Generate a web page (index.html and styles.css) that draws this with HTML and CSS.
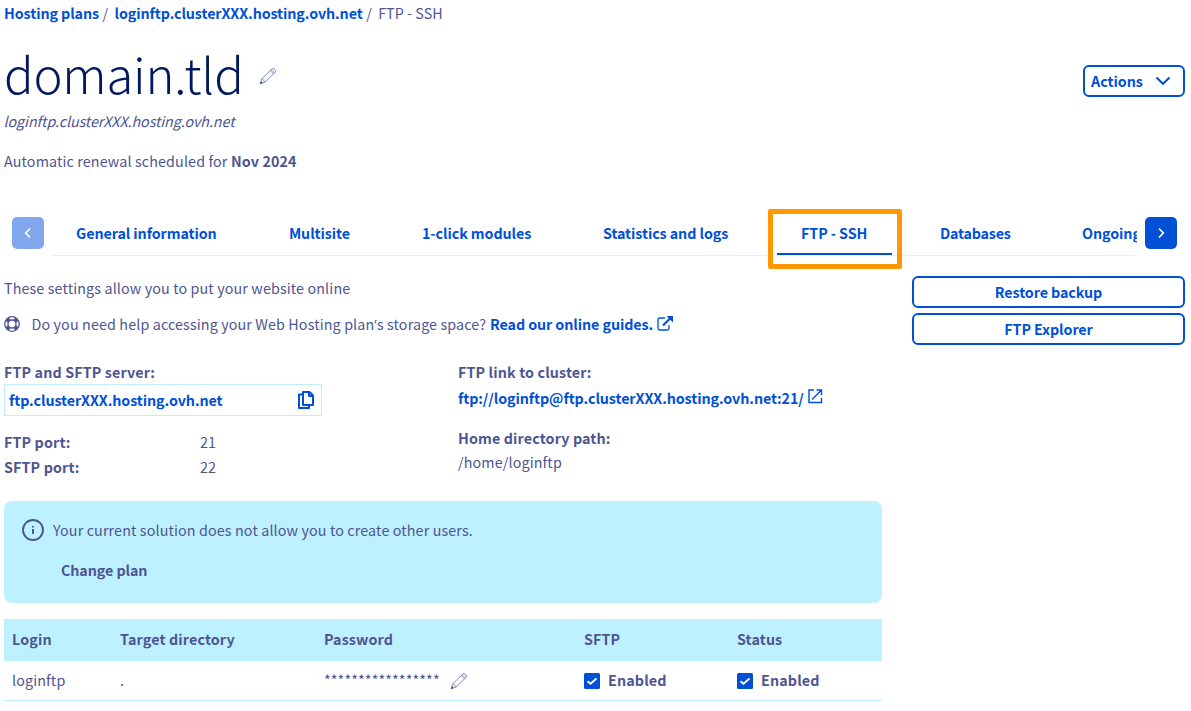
FILE: index.html
```html
<!DOCTYPE html>
<html lang="en">
<head>
<meta charset="utf-8">
<title>FTP - SSH</title>
<link rel="stylesheet" href="styles.css">
</head>
<body>
<svg class="sprite" width="0" height="0">
  <symbol id="pencil" viewBox="0 0 18 18"><path d="M1.2 16.8 3 11.7 12.8 1.9Q13.8.9 15 2l1 1q1.1 1.2.1 2.200L6.300 15zM3 11.700 6.300 15M11.200 3.500l3.300 3.300M12.200 2.500l3.300 3.300" fill="none" stroke="currentColor" stroke-width=".7"/><path d="m1 17 1-3 2 2z" fill="currentColor"/></symbol>
  <symbol id="check" viewBox="0 0 16 16"><rect width="16" height="16" rx="1.500" fill="#0050d7"/><path d="m3.500 8.200 3 2.600 6-5.300" fill="none" stroke="#fff" stroke-width="1.900"/></symbol>
</svg>
<nav class="crumbs"><a class="crumb-a">Hosting plans</a><span class="sep">/</span><a class="crumb-b">loginftp.clusterXXX.hosting.ovh.net</a><span class="sep">/</span><span class="crumb-c">FTP - SSH</span></nav>
<header class="head">
  <h1><span class="domain">domain.tld</span><svg class="pencil" width="18" height="18"><use href="#pencil"/></svg></h1>
  <button class="btn actions"><span>Actions</span><svg width="16" height="10" viewBox="0 0 16 10"><path d="m1.500 1.500 6.500 6.300 6.500-6.300" fill="none" stroke="currentColor" stroke-width="2"/></svg></button>
</header>
<p class="service"><span>loginftp.clusterXXX.hosting.ovh.net</span></p>
<p class="renewal"><span>Automatic renewal scheduled for</span> <b>Nov 2024</b></p>
<div class="tabbar">
  <button class="arrow off"><svg width="8" height="12" viewBox="0 0 8 12"><path d="M6 1.500 1.700 6 6 10.500" fill="none" stroke="currentColor" stroke-width="1.700"/></svg></button>
  <div class="tabs">
    <a class="tab t1">General information</a><a class="tab t2">Multisite</a><a class="tab t3">1-click modules</a><a class="tab t4">Statistics and logs</a><a class="tab t5 active">FTP - SSH</a><a class="tab t6">Databases</a><a class="tab t7">Ongoing</a>
  </div>
  <button class="arrow"><svg width="8" height="12" viewBox="0 0 8 12"><path d="M2 1.500 6.300 6 2 10.500" fill="none" stroke="currentColor" stroke-width="1.700"/></svg></button>
  <div class="highlight"></div>
</div>
<div class="layout">
  <main>
    <p class="intro">These settings allow you to put your website online</p>
    <p class="help"><svg width="16" height="16" viewBox="0 0 16 16"><circle cx="8" cy="8" r="7.300" fill="none" stroke="currentColor" stroke-width="1.300"/><circle cx="8" cy="8" r="4" fill="none" stroke="currentColor" stroke-width="1.300"/><path d="m3 3 2.200 2.200M13 3l-2.200 2.200M3 13l2.200-2.200M13 13l-2.200-2.200" stroke="currentColor" stroke-width="4.200"/></svg><span class="question">Do you need help accessing your Web Hosting plan<span class="apos">’</span>s storage space?</span><a>Read our online guides.</a><svg class="ext" width="17" height="16" viewBox="0 0 17 16"><path d="M8 2H2.500Q1 2 1 3.500v9Q1 14 2.500 14h8q1.500 0 1.500-1.500V9" fill="none" stroke="currentColor" stroke-width="1.300"/><path d="M6 9.500 13.500 2" stroke="currentColor" stroke-width="2.200"/><path d="M9.500 0H16v6.500z" fill="currentColor"/></svg></p>
    <div class="details">
      <section>
        <h3>FTP and SFTP server:</h3>
        <div class="copy"><a>ftp.clusterXXX.hosting.ovh.net</a><svg width="18" height="20" viewBox="0 0 18 20"><path d="M6 2h6.500L16 5.500V15H6zM12 2v4h4M5 4.500H2V18h10v-2" fill="none" stroke="currentColor" stroke-width="2" stroke-linejoin="round"/></svg></div>
        <dl class="ports"><dt>FTP port:</dt><dd>21</dd><dt>SFTP port:</dt><dd>22</dd></dl>
      </section>
      <section>
        <h3>FTP link to cluster:</h3>
        <p class="link"><a>ftp://loginftp@ftp.clusterXXX.hosting.ovh.net:21/</a><svg width="15" height="15" viewBox="0 0 15 15"><path d="M6 1H1v12.500h12.500V9M8.500 1h5v5M13.500 1 4 10.500" fill="none" stroke="currentColor" stroke-width="1.400"/></svg></p>
        <h3 class="home">Home directory path:</h3>
        <p class="path">/home/loginftp</p>
      </section>
    </div>
    <div class="notice">
      <svg width="22" height="22" viewBox="0 0 22 22"><circle cx="11" cy="11" r="10" fill="none" stroke="currentColor" stroke-width="1.900"/><path d="M10 7h2v1.500h-2zM10 10h2v5h-2z" fill="currentColor"/></svg>
      <div><p class="msg">Your current solution does not allow you to create other users.</p><p class="change">Change plan</p></div>
    </div>
    <div class="row thead"><span>Login</span><span>Target directory</span><span>Password</span><span>SFTP</span><span>Status</span></div>
    <div class="row"><span>loginftp</span><span>.</span><span class="pw"><span class="stars">*****************</span><svg width="18" height="18"><use href="#pencil"/></svg></span><span class="state"><svg width="16" height="16"><use href="#check"/></svg><span>Enabled</span></span><span class="state"><svg width="16" height="16"><use href="#check"/></svg><span>Enabled</span></span></div>
  </main>
  <aside><button class="btn">Restore backup</button><button class="btn">FTP Explorer</button></aside>
</div>
</body>
</html>
```
FILE: styles.css
```css
* { box-sizing: border-box; margin: 0; }
body { height: 711px; overflow: hidden; padding: 0 6px 0 4px; background: #fff; color: #4d5592; font: 14.3px/24px "Noto Sans CJK SC", "Noto Sans", sans-serif; letter-spacing: .13px; white-space: nowrap; }
svg { flex: none; display: block; }
.sprite { position: absolute; }
a, b, h3, .btn { font-weight: 700; }
a, .btn { color: #0050d7; letter-spacing: -.085px; }
b { letter-spacing: .12px; }
button { font: inherit; padding: 0; }
.crumbs { display: flex; height: 26px; align-items: center; }
.crumb-b { letter-spacing: -.1px; }
.crumb-c { letter-spacing: .06px; }
.sep { width: 15.500px; padding-left: 3.500px; }
.head { display: flex; justify-content: space-between; height: 81px; padding-top: 10px; }
h1 { display: flex; height: 71px; font-weight: 300; font-size: 49px; line-height: 74px; letter-spacing: -.2px; color: #00185e; }
.domain { width: 255px; }
.pencil { margin-top: 31px; color: #4d5592; }
.btn { border: 2px solid #0050d7; border-radius: 6px; background: #fff; height: 32px; }
.actions { width: 102px; margin-top: 29px; display: flex; align-items: center; justify-content: space-between; padding: 0 12px 0 6px; letter-spacing: -.03px; }
.service { font-style: italic; letter-spacing: -.08px; margin: 2px 0 0 -.5px; }
.renewal { margin-top: 16px; }
.tabbar { position: relative; display: flex; gap: 8px; padding: 0 8px; margin-top: 44px; height: 39px; }
.arrow { width: 32px; height: 32px; border: 0; border-radius: 5px; background: #0050d7; color: #fff; display: flex; align-items: center; justify-content: center; }
.off { background: #80a7eb; }
.tabs { width: 1085px; display: flex; gap: 24px; overflow: hidden; border-bottom: 1px solid #e6f2fa; }
.tab { flex: none; padding-left: 24px; height: 38px; line-height: 31px; }
.t1 { width: 189px; } .t2 { width: 109px; } .t3 { width: 157px; } .t4 { width: 174px; } .t5 { width: 115px; } .t6 { width: 118px; letter-spacing: -.2px; }
.active { border-bottom: 2px solid #0050d7; }
.highlight { position: absolute; left: 764px; top: -8px; width: 134px; height: 60px; border: 5px solid #ff9900; border-radius: 2px; }
.layout { display: grid; grid-template-columns: 878px 273px; gap: 30px; padding-top: 20px; }
aside { display: flex; flex-direction: column; gap: 5px; }
.intro { line-height: 24px; height: 26px; }
.help { display: flex; align-items: center; margin-top: 9px; height: 26px; }
.question { width: 470px; padding-left: 11.500px; }
.apos { font-family: "Open Sans", sans-serif; line-height: 1; }
.help .ext { color: #0050d7; margin: -1px 0 0 4px; }
.details { display: grid; grid-template-columns: 454px 1fr; margin-top: 23px; height: 141px; }
h3 { font-size: inherit; }
.copy { width: 318px; height: 32px; border: 1px solid #bef1ff; padding: 0 6px 0 4px; display: flex; align-items: center; justify-content: space-between; color: #0050d7; }
.ports { display: grid; grid-template-columns: 196px 1fr; margin-top: 13px; line-height: 25px; }
dt { font-weight: 700; } dd { margin: 0; }
.link { display: flex; color: #0050d7; height: 28px; line-height: 28px; gap: 4px; }
.link svg { margin-top: 5px; }
.home { margin-top: 14px; }
.notice { display: flex; gap: 9px; height: 102px; border-radius: 8px; background: #bef1ff; padding: 18px; }
.msg { margin-top: -1px; }
.change { font-weight: 700; letter-spacing: -.08px; padding-left: 8px; margin-top: 16px; }
.row { display: grid; grid-template-columns: 108px 204px 260px 153px 1fr; height: 40px; line-height: 22px; align-items: center; padding-left: 8px; border-bottom: 1px solid #bef1ff; }
.row > span:not(.pw):not(.state), .state span, .stars { padding-bottom: 2px; }
.thead { margin-top: 16px; height: 42px; background: #bef1ff; font-weight: 700; }
.pw, .state { display: flex; align-items: center; }
.stars { width: 126px; }
.state { gap: 8px; font-weight: 700; }
```
